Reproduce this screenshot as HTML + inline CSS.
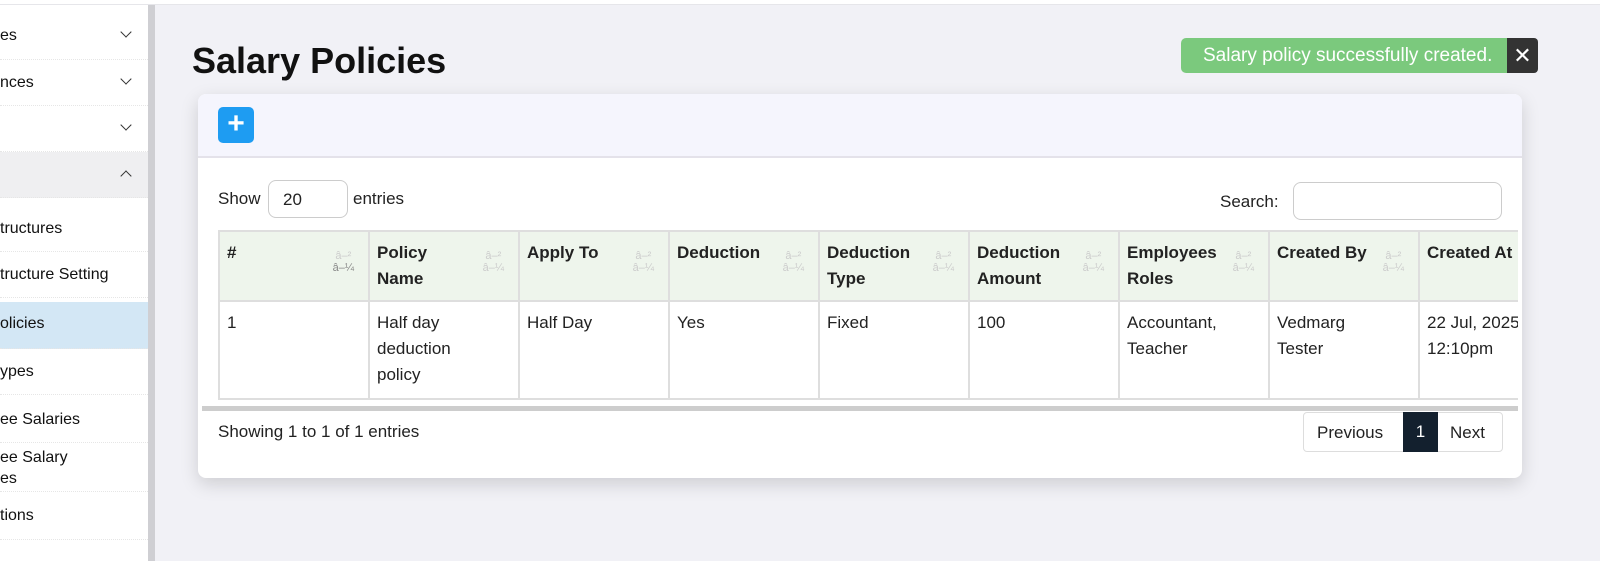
<!DOCTYPE html>
<html><head><meta charset="utf-8"><style>
*{box-sizing:border-box;margin:0;padding:0}
body{width:1600px;height:561px;overflow:hidden;background:#f1f1f6;font-family:"Liberation Sans",sans-serif;color:#222;position:relative}
.top{position:absolute;left:0;top:0;width:1600px;height:5px;background:#fff;border-bottom:1px solid #e6e6ea}
.side{position:absolute;left:0;top:5px;width:148px;height:556px;background:#fff}
.bar{position:absolute;left:148px;top:5px;width:7px;height:556px;background:#cfcfd3}
.it{position:absolute;left:0;width:148px;border-bottom:1px dotted #e6e6e6;font-size:16px;color:#111;padding-left:0}
.it span{position:absolute;left:0}
.chev{position:absolute;right:18px;width:8px;height:8px;border-right:1.5px solid #333;border-bottom:1.5px solid #333}
h1{position:absolute;left:192px;top:40px;font-size:36px;font-weight:bold;color:#111}
.card{position:absolute;left:198px;top:94px;width:1324px;height:384px;background:#fff;border-radius:8px;box-shadow:0 6px 18px rgba(0,0,0,.15);overflow:hidden}
.ch{height:64px;background:#f5f5fd;border-bottom:2px solid #e4e2ea}
.plus{position:absolute;left:20px;top:13px;width:36px;height:36px;background:#1e9cf2;border-radius:5px;color:#fff;font-size:30px;line-height:34px;text-align:center;font-weight:bold}
.lbl{position:absolute;font-size:17px;color:#222}
.inp{position:absolute;border:1px solid #ccc;border-radius:8px;background:#fff}
table{position:absolute;left:0;top:0;border-collapse:collapse;table-layout:fixed;width:1350px}
td,th{width:150px;border:2px solid #dedede;vertical-align:top;text-align:left;padding:8px 7px;font-size:17px;line-height:26px}
th{background:#eef5ec;height:70px;font-weight:bold;color:#222;position:relative}
td{height:98px;color:#222}
.s{position:absolute;right:14px;top:18px;font-size:11px;line-height:12px;color:#ccc;font-weight:normal;text-align:center}
.toast{position:absolute;left:1181px;top:38px;width:326px;height:35px;background:#7bc97d;border-radius:5px 0 0 5px;color:#fff;font-size:19px;line-height:35px;padding-left:22px;white-space:nowrap}
.x{position:absolute;left:1507px;top:38px;width:31px;height:35px;background:#333;color:#fff;font-size:22px;text-align:center;line-height:35px;border-radius:0 4px 4px 0}
</style></head><body>
<div class="top"></div>
<div class="side">
<div class="it" style="top:8px;height:47px"><span style="top:14px">es</span><i class="chev" style="top:15px;transform:rotate(45deg)"></i></div>
<div class="it" style="top:55px;height:46px"><span style="top:14px">nces</span><i class="chev" style="top:15px;transform:rotate(45deg)"></i></div>
<div class="it" style="top:101px;height:46px"><i class="chev" style="top:15px;transform:rotate(45deg)"></i></div>
<div class="it" style="top:147px;height:46px;background:#efeff1"><i class="chev" style="top:20px;transform:rotate(225deg)"></i></div>
<div class="it" style="top:201px;height:46px"><span style="top:14px">tructures</span></div>
<div class="it" style="top:247px;height:46px"><span style="top:14px">tructure Setting</span></div>
<div class="it" style="top:297px;height:47px;background:#d3e7f5"><span style="top:13px">olicies</span></div>
<div class="it" style="top:344px;height:46px"><span style="top:14px">ypes</span></div>
<div class="it" style="top:390px;height:48px"><span style="top:16px">ee Salaries</span></div>
<div class="it" style="top:438px;height:49px"><span style="top:4px;line-height:21px">ee Salary<br>es</span></div>
<div class="it" style="top:487px;height:48px"><span style="top:15px">tions</span></div>
</div>
<div class="bar"></div>
<h1>Salary Policies</h1>
<div class="card">
<div class="ch"><div class="plus">+</div></div>
<div class="lbl" style="left:20px;top:95px">Show</div>
<div class="inp" style="left:70px;top:86px;width:80px;height:38px"><span class="lbl" style="left:14px;top:9px">20</span></div>
<div class="lbl" style="left:155px;top:95px">entries</div>
<div class="lbl" style="left:1022px;top:98px">Search:</div>
<div class="inp" style="left:1095px;top:88px;width:209px;height:38px"></div>
<div style="position:absolute;left:20px;top:136px;width:1300px;height:170px;overflow:hidden">
<table>
<tr><th>#<div class="s">â–²<br><span style="color:#888">â–¼</span></div></th><th>Policy<br>Name<div class="s">â–²<br>â–¼</div></th><th>Apply To<div class="s">â–²<br>â–¼</div></th><th>Deduction<div class="s">â–²<br>â–¼</div></th><th>Deduction<br>Type<div class="s">â–²<br>â–¼</div></th><th>Deduction<br>Amount<div class="s">â–²<br>â–¼</div></th><th>Employees<br>Roles<div class="s">â–²<br>â–¼</div></th><th>Created By<div class="s">â–²<br>â–¼</div></th><th>Created At</th></tr>
<tr><td>1</td><td>Half day<br>deduction<br>policy</td><td>Half Day</td><td>Yes</td><td>Fixed</td><td>100</td><td>Accountant,<br>Teacher</td><td>Vedmarg<br>Tester</td><td>22 Jul, 2025<br>12:10pm</td></tr>
</table></div>
<div style="position:absolute;left:4px;top:312px;width:1316px;height:5px;background:#cdcdcd"></div>
<div class="lbl" style="left:20px;top:328px">Showing 1 to 1 of 1 entries</div>
<div style="position:absolute;left:1105px;top:318px;width:200px;height:40px;border:1px solid #ddd;border-radius:4px;font-size:17px">
<span style="position:absolute;left:13px;top:10px">Previous</span>
<span style="position:absolute;left:99px;top:-1px;width:35px;height:40px;background:#13202e;color:#fff;text-align:center;line-height:40px">1</span>
<span style="position:absolute;left:146px;top:10px">Next</span></div>
</div>
<div class="toast">Salary policy successfully created.</div>
<div class="x">✕</div>
</body></html>
